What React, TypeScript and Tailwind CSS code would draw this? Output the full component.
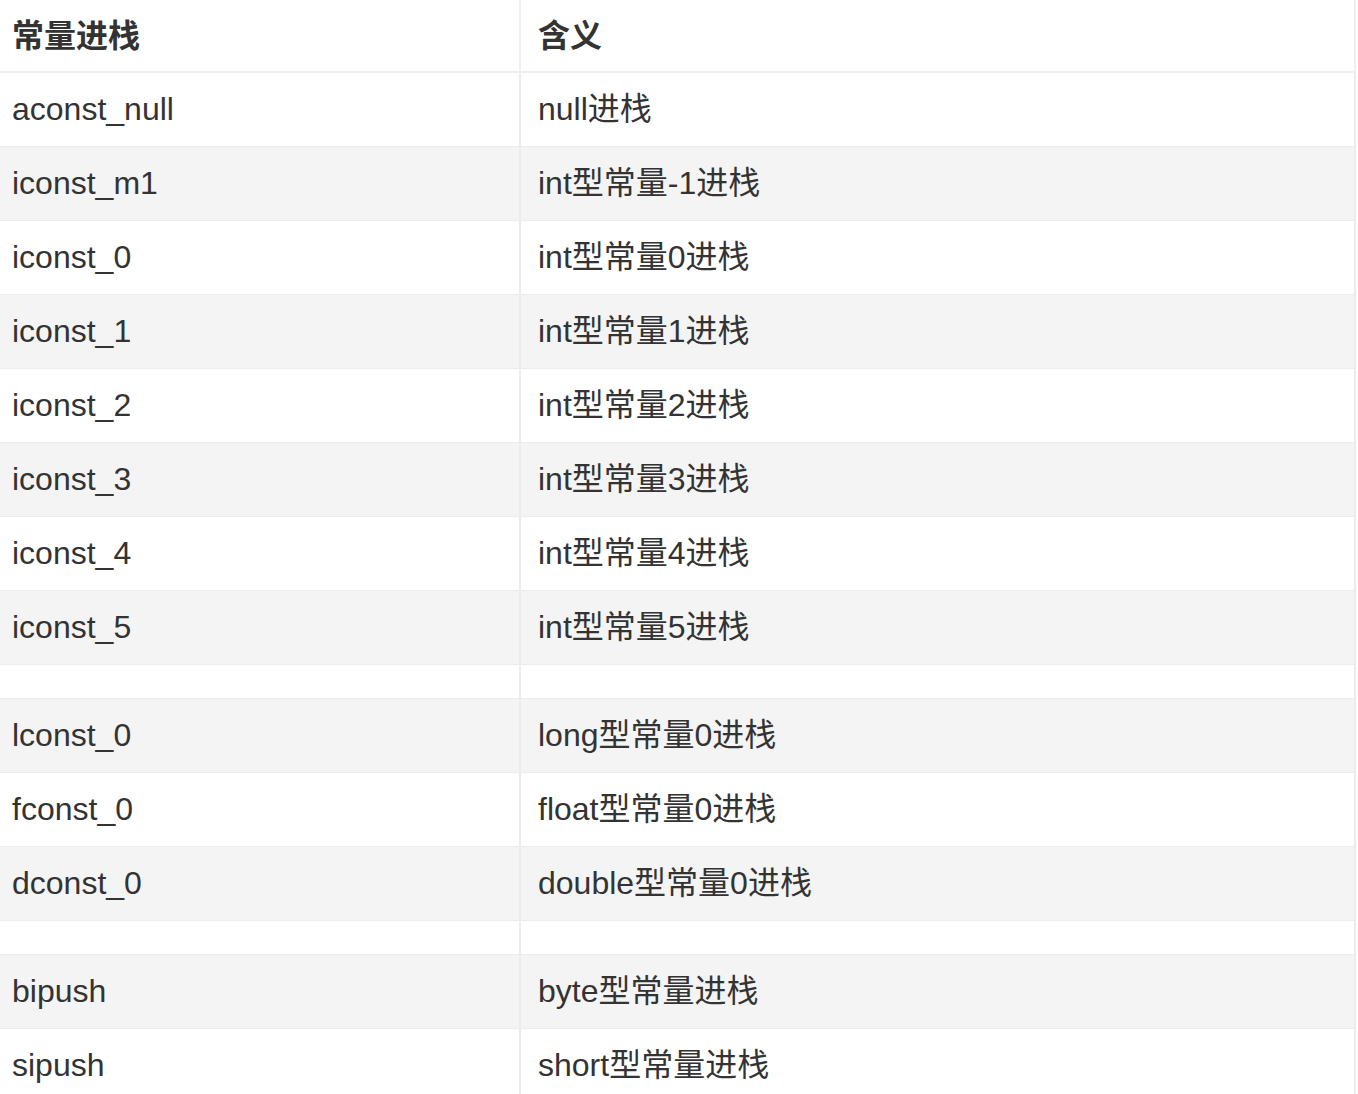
import React from "react";

type Row = { a: string; b: string; empty?: boolean };

const rows: Row[] = [
  { a: "aconst_null", b: "null进栈" },
  { a: "iconst_m1", b: "int型常量-1进栈" },
  { a: "iconst_0", b: "int型常量0进栈" },
  { a: "iconst_1", b: "int型常量1进栈" },
  { a: "iconst_2", b: "int型常量2进栈" },
  { a: "iconst_3", b: "int型常量3进栈" },
  { a: "iconst_4", b: "int型常量4进栈" },
  { a: "iconst_5", b: "int型常量5进栈" },
  { a: "", b: "", empty: true },
  { a: "lconst_0", b: "long型常量0进栈" },
  { a: "fconst_0", b: "float型常量0进栈" },
  { a: "dconst_0", b: "double型常量0进栈" },
  { a: "", b: "", empty: true },
  { a: "bipush", b: "byte型常量进栈" },
  { a: "sipush", b: "short型常量进栈" },
];

export default function App() {
  return (
    <div
      className="w-[1358px] h-[1094px] overflow-hidden bg-white text-[#333333]"
      style={{ fontFamily: '"Liberation Sans", "Noto Sans CJK SC", sans-serif' }}
    >
      <table className="w-[1356px] border-collapse text-[32px] leading-none">
        <thead>
          <tr className="h-[72px] bg-white">
            <th className="w-[520px] border-r-2 border-b-2 border-[#efefef] pl-[12px] text-left font-bold">
              常量进栈
            </th>
            <th className="border-r-2 border-b-2 border-[#efefef] pl-[17px] text-left font-bold">
              含义
            </th>
          </tr>
        </thead>
        <tbody>
          {rows.map((r, i) => (
            <tr
              key={i}
              className={
                (i % 2 === 0 ? "bg-white " : "bg-[#f4f4f4] ") +
                (r.empty ? "h-[34px]" : "h-[74px]")
              }
            >
              <td className="border-r-2 border-b border-[#ececec] pl-[12px]">{r.a}</td>
              <td className="border-r-2 border-b border-[#ececec] pl-[17px]">{r.b}</td>
            </tr>
          ))}
        </tbody>
      </table>
    </div>
  );
}
